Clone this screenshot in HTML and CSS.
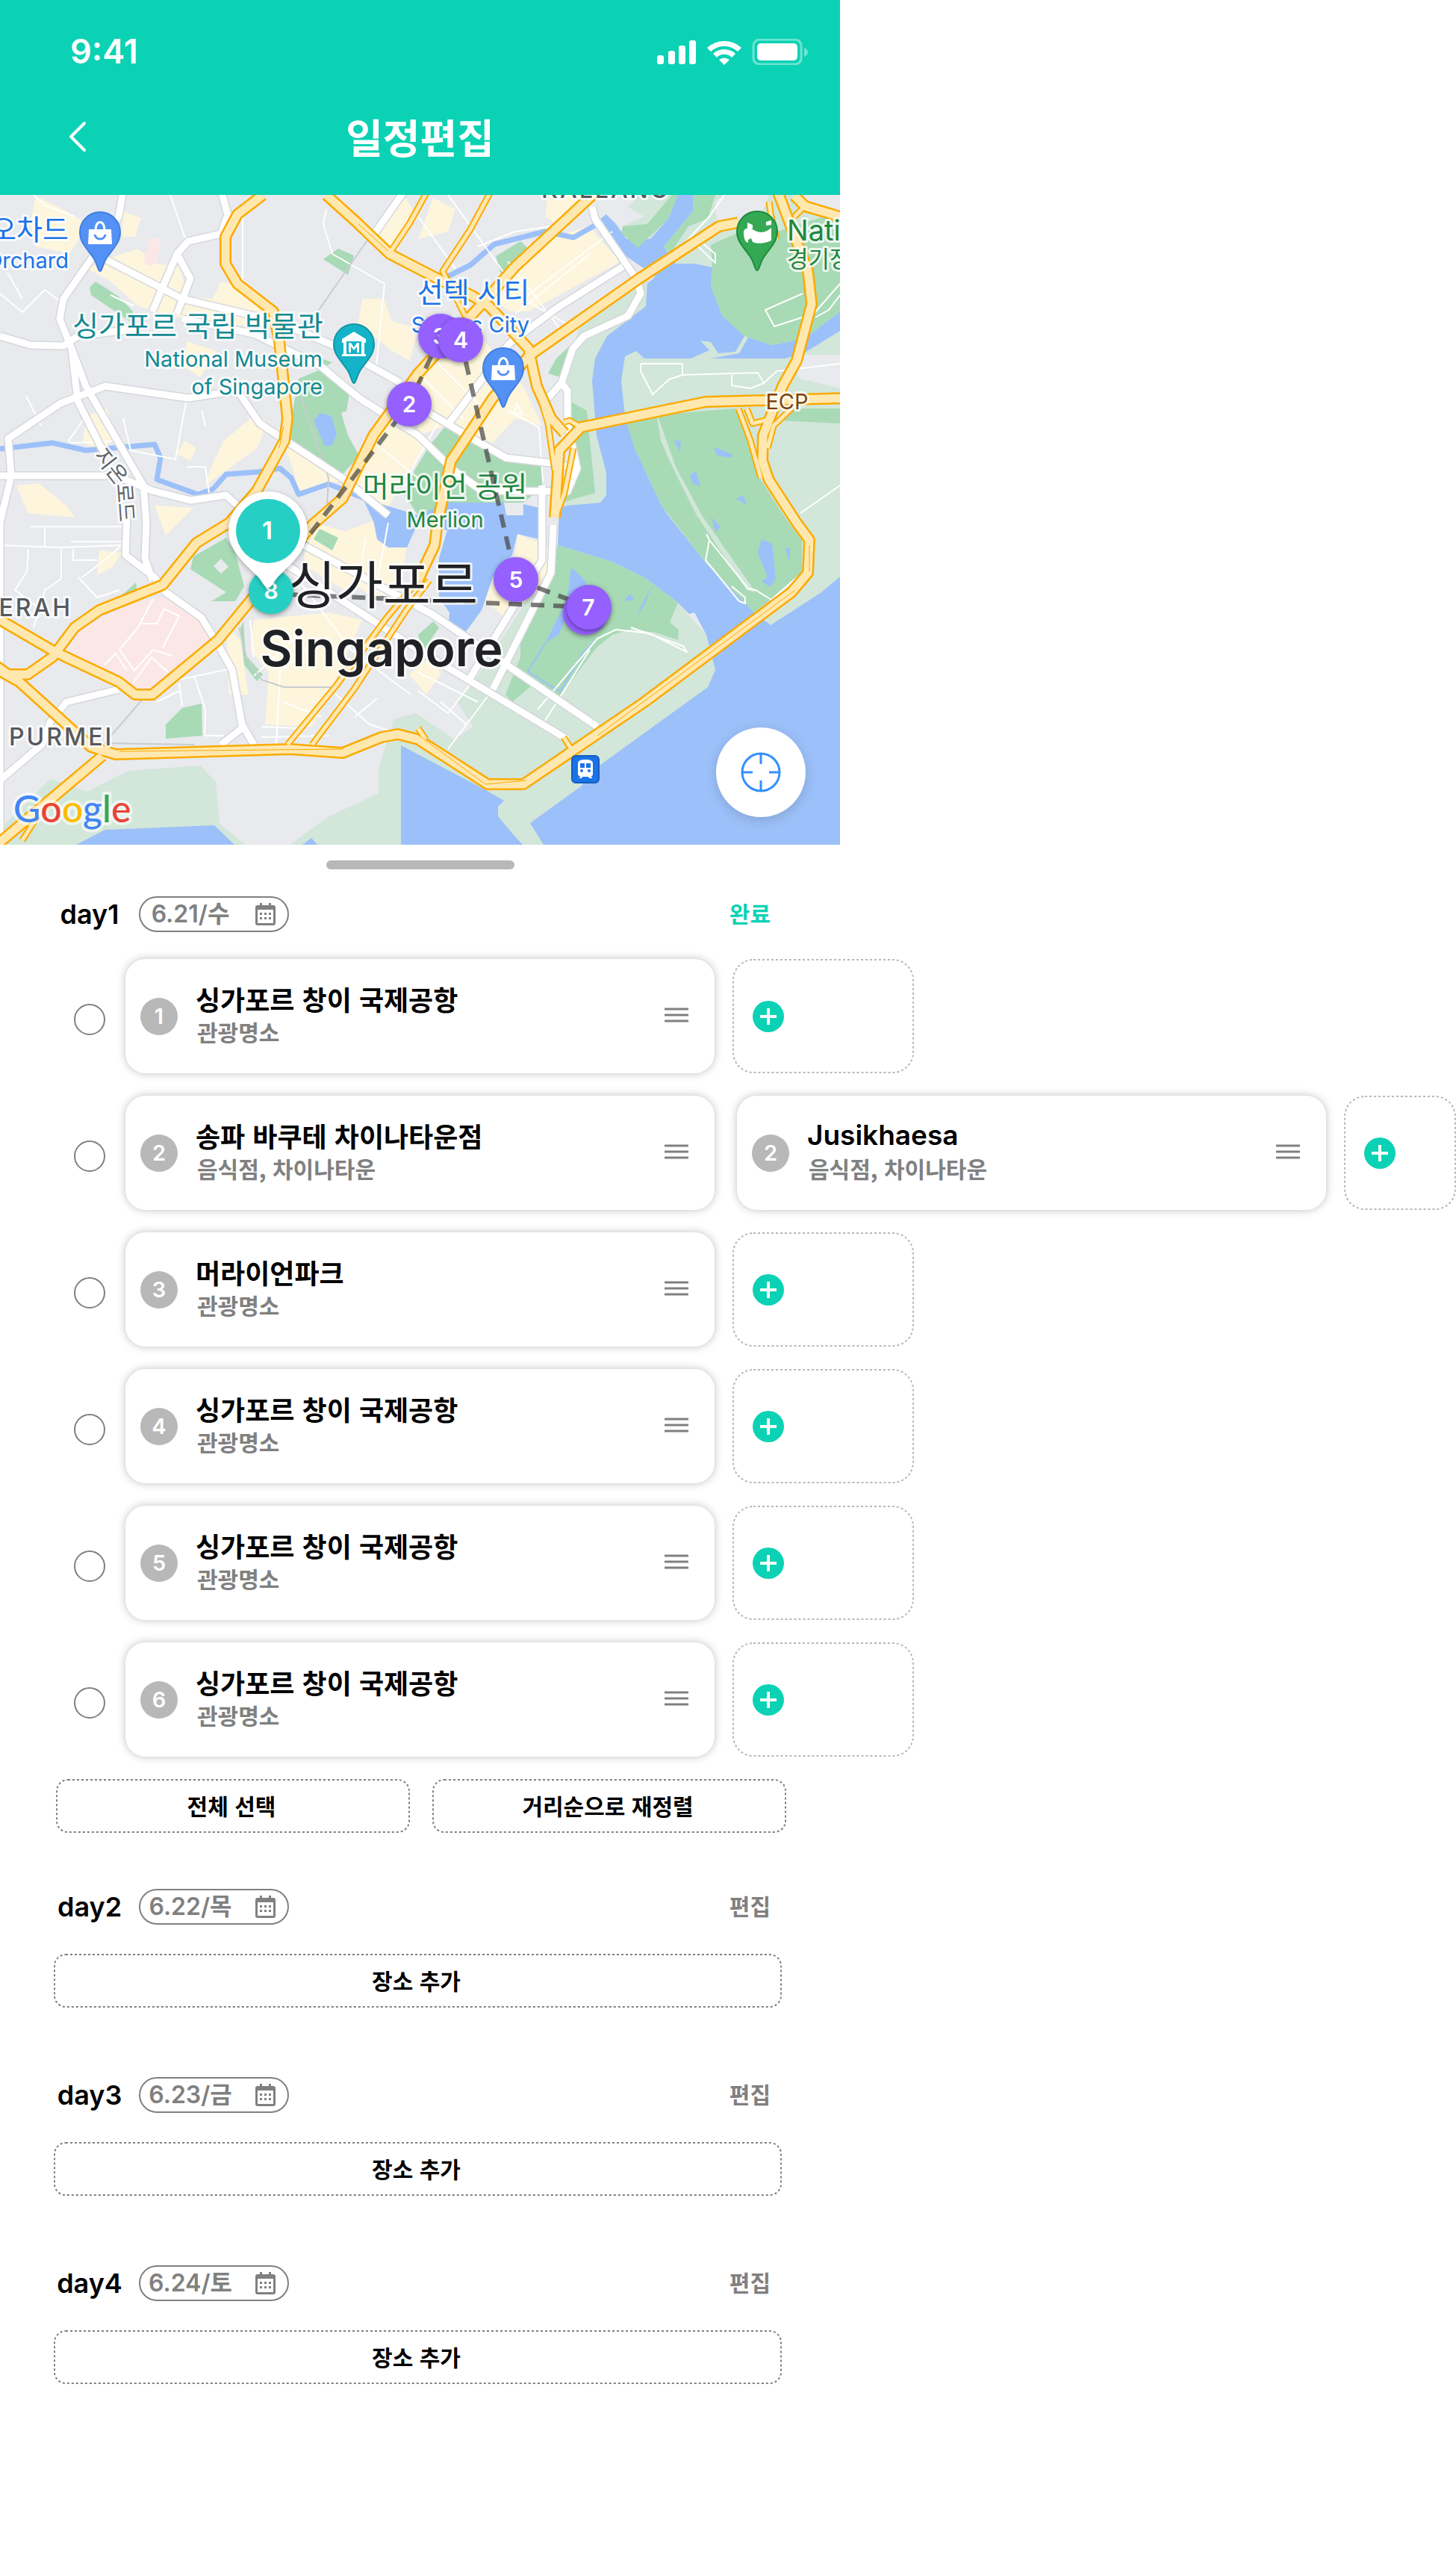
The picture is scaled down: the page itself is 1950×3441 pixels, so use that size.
FILE: index.html
```html
<!DOCTYPE html>
<html lang="ko">
<head>
<meta charset="utf-8">
<meta name="viewport" content="width=device-width, initial-scale=1">
<title>일정편집</title>
<link rel="stylesheet" href="styles.css">
</head>
<body>
<svg class="defs" aria-hidden="true">
  <symbol id="calendar" viewBox="0 0 27 30"><path fill-rule="evenodd" d="M6 0h3v3h9V0h3v3h3a3 3 0 0 1 3 3v21a3 3 0 0 1-3 3H3a3 3 0 0 1-3-3V6a3 3 0 0 1 3-3h3zM3 9v18h21V9zM6 13h3v3H6zm6 0h3v3h-3zm6 0h3v3h-3zM6 19h3v3H6zm6 0h3v3h-3zm6 0h3v3h-3z"/></symbol>
  <symbol id="plus" viewBox="0 0 42 42"><circle cx="21" cy="21" r="21" fill="#0bd2b4"/><path d="M21 10v22M10 21h22" stroke="#fff" stroke-width="4"/></symbol>
  <symbol id="handle" viewBox="0 0 32 20"><path d="M1 2h30M1 10h30M1 18h30" stroke="#808080" stroke-width="3" stroke-linecap="round"/></symbol>
</svg>

<main class="screen">
  <header class="top">
    <div class="status">
      <span class="clock">9:41</span>
      <svg class="status-icons" viewBox="0 0 203 35" fill="#fff" aria-hidden="true">
        <rect x="0" y="22" width="9" height="12" rx="3"/><rect x="15" y="16" width="9" height="18" rx="3"/><rect x="29" y="9" width="9" height="25" rx="3"/><rect x="43" y="2" width="9" height="32" rx="3"/>
        <path d="M67 12a34 34 0 0 1 46 0l-5 5a26 26 0 0 0-36 0zM75 20a22 22 0 0 1 30 0l-5 5a14 14 0 0 0-20 0zM83 28a11 11 0 0 1 14 0l-7 7z"/>
        <rect x="129" y="1" width="64" height="33" rx="8" fill="none" stroke="#fff" stroke-opacity=".4" stroke-width="3"/>
        <rect x="134" y="6" width="54" height="23" rx="5"/><path d="M197 12q5 2 5 6t-5 6z" opacity=".4"/>
      </svg>
    </div>
    <div class="title-bar">
      <button class="back" type="button" aria-label="뒤로"><svg viewBox="0 0 24 42"><path d="M21 3 3 21l18 18" fill="none" stroke="#fff" stroke-width="4" stroke-linecap="round" stroke-linejoin="round"/></svg></button>
      <h1>일정편집</h1>
    </div>
  </header>

  <section class="map" aria-label="지도">
    <svg class="map-canvas" viewBox="0 261 1125 870" preserveAspectRatio="xMidYMid slice">
      <defs>
        <g id="highways">
          <path d="M352 261 318 287 302 317V353L318 380 366 417 374 457 385 560 381 590 344 657 307 700 263 727 218 783 133 817 100 840 70 880 37 903H11L-10 888"/>
          <path d="M437 261 477 297 522 340 580 370 634 397 655 410 708 467 719 517 738 560 756 580"/>
          <path d="M800 255 690 357 649 403 560 500 500 583 459 667 418 703 333 807 292 857 204 930H181L159 913 74 873 0 830"/>
          <path d="M989 298 963 303 856 373 708 477 660 533 604 617 586 700 582 730 560 777"/>
          <path d="M1041 255 1082 363 1087 407 1067 483 1048 517 1022 583 1021 617 1030 643 1067 700 1084 723 1082 767 1060 793 863 940 701 1050H653L560 990 533 983 511 987 459 1008 389 1003 155 1010 122 1000 26 913-10 893"/>
          <path d="M137 1012-10 1136"/>
          <path d="M1135 533 945 538 778 572 749 603 743 693"/>
          <path d="M1064 262 1078 276 1135 293"/>
        </g>
        <g id="slips">
          <path d="M573 255 548 300 523 337M658 255 630 307 593 363 623 423M719 517 734 567 743 630M778 572 763 563 756 565"/>
          <path d="M560 777 518 827 451 917 385 997M575 777 544 817 474 923 418 997"/>
          <path d="M989 547 1005 590 1019 640M1060 547 1036 570 1028 600M1000 547 1008 567 1028 562M768 600 756 660 745 690M560 975 570 990M755 987 765 1003M1030 270 1034 300M1078 276 1064 290M55 1085 30 1125M1033 290 1040 320"/>
        </g>
        <g id="streets">
          <path d="M165 255 159 290 122 347 85 400 80 427 96 467 115 517 192 650 196 700 194 747 204 777"/>
          <path d="M0 450 41 462 85 463 104 450 185 440M96 467 104 537 141 610"/>
          <path d="M0 637 155 637 204 657 255 670 303 663 318 677M0 1130V700L15 637 11 587 81 540 141 517 252 533 318 523 348 567 463 643 520 690"/>
          <path d="M141 347 244 400 370 430 448 463 537 513M296 255 305 287 296 313 252 323 237 340 204 417M237 340 255 373 237 420"/>
          <path d="M244 427 340 447 429 490 481 533 560 583 608 630 645 657 760 658 773 627 760 567V523L752 513 767 467 782 450 841 423 858 393 852 373 797 293 793 277"/>
          <path d="M834 357 745 413 682 460 601 567M537 530 615 577 678 613 738 620 773 627"/>
          <path d="M726 650V750L630 907M741 703 738 767 660 923M388 720 580 823 800 973M385 757 560 870 760 990"/>
          <path d="M170 690 168 743 207 773 222 793 270 827 292 863 311 897 324 970 340 997M324 975 296 997"/>
          <path d="M159 923 89 940 67 967 56 997-5 1049M542 255 500 315M752 513 732 535"/>
        </g>
      </defs>
      <rect y="261" width="1125" height="870" fill="#e8eaed"/>
      <g fill="#fdf5dc">
        <path d="M48 263 80 278 118 300 93 340 48 330 40 300ZM165 283 189 292 181 317 163 317ZM118 360 141 347 185 333 207 353 240 357 252 397 285 400 296 377 311 380 355 410 366 437H333L229 423 185 410 148 377Z"/>
        <path d="M485 400 514 400 525 430 560 440 549 483 525 470 480 433ZM734 261H782L745 300 730 290ZM708 327 789 303 830 350 819 357 708 417H682L652 393ZM571 483 630 440 649 457 701 517 726 570 690 560 660 593 597 570 560 583 560 503ZM540 261 560 290 530 335 505 320 520 290ZM580 265 610 280 600 310 560 320Z"/>
        <path d="M115 557 144 547 152 587 137 603 111 593ZM237 607 248 590 263 600 255 617ZM344 553 359 567 344 600 307 627 274 650 285 620 300 590ZM381 597 459 643 400 657 392 627ZM22 650 52 647 89 677 100 693 37 687ZM207 677 259 680 222 717ZM250 457 290 470 268 505 245 490ZM518 560 555 570 570 600 548 630 518 683 459 643Z"/>
        <path d="M411 697 481 717 500 743 462 790 407 757ZM340 830 440 820 485 830 444 923 418 973 355 970 360 900 335 870ZM303 837 322 857 333 930H307ZM548 903 580 877 590 903 571 930ZM133 737 163 740 150 760 130 770ZM410 730 520 690 545 730 535 790 500 800 420 745Z"/>
      </g>
      <path fill="#fbe8e6" d="M89 870 111 840 178 807 222 799 266 827 281 857 200 925H178L126 890ZM200 318 216 320 211 350 203 356 192 353Z"/>
      <g fill="#d2e6da">
        <path d="M856 261 841 277 863 290 834 303 854 332 880 360 832 480 837 560 886 677 945 753 1026 837 1125 830V261Z"/>
        <path d="M863 373 782 423 767 463 757 520 763 640 749 678 804 673 870 600 870 373Z"/>
        <path d="M0 1110 67 1043 117 1060 172 1032 268 1025 289 1047 294 1103 329 1131H0ZM389 1131 437 1095 507 1062V1030L527 963 557 955 608 990 634 973 612 940 640 905 697 817 747 730 819 752 908 807 946 850 958 897 948 920 800 1040 740 1131Z"/>
      </g>
      <path fill="#e8eaed" d="M958 270 970 261H1030L1015 300 960 300ZM1078 475H1125V520L1071 507 1060 490ZM1060 261H1125V285L1080 272Z"/>
      <path fill="#fdf5dc" d="M693 715 723 727 737 735 734 760 723 790 675 827 650 803 660 773 690 745Z"/>
      <g fill="#9cc0f9">
        <path d="M908 261H928V283L889 330 904 353H930L954 358 952 383 967 422 997 450 1034 462 1078 453 1125 417V443L1078 472 1052 480H863L852 470 837 477 832 510 837 557 850 600 886 677 895 690 945 753 1010 820 1032 837 1074 810 1100 793 1125 772V1131H728L710 1102 778 1053 800 1027 948 920 958 897 946 850 930 820 923 822 908 807 863 773 819 752 747 730 749 678 804 673 812 663V633L799 583 793 510 797 480 813 450 865 410 867 380 878 370 834 340 804 293 812 287 825 300 839 320 871 320 895 293Z"/>
        <path d="M537 998 649 1057 675 1072 667 1080V1093L688 1118 700 1131H537ZM102 1131 141 1111 287 1105 314 1131ZM405 1131 417 1122 425 1131Z"/>
        <path d="M571 677 608 672 675 673 678 690H701V675L723 680V722L693 715 686 743 660 773 645 817 623 847 601 833 602 820 588 800V747L599 710 560 700 545 733 520 733 505 722 495 670 560 690Z"/>
      </g>
      <path fill="none" stroke="#9cc0f9" stroke-width="7" stroke-linejoin="round" d="M0 601 70 593 115 603 207 595 215 613 210 642 265 662 285 655 303 635 345 632 375 627 390 640 400 662 440 648 490 668 505 700M600 370 630 355 662 327 730 310 768 318 800 300"/>
      <g fill="#a8dab5">
        <path d="M900 261H908L895 293 854 332 832 312 834 303 867 300ZM928 261H958L948 293 922 303 897 340 889 330 928 283Z"/>
        <path d="M952 328 985 313 1041 310 1125 283V417L1078 453 1034 462 997 450 967 422 952 383 954 358Z"/>
        <path d="M837 560 945 550 985 547 998 570 1015 617 1019 643 1056 700 1074 723V767L1032 803 1010 820 945 753 886 677 850 600ZM1060 547H1125V567L1045 563Z"/>
        <path d="M747 730 819 752 863 773 908 807 897 833 909 843 908 857 878 847 845 842 820 850 798 868 748 935 715 915 686 940 677 930 697 880V845L735 780Z"/>
        <path d="M763 537 786 550 797 660 752 673 763 640ZM745 480 763 463 756 507 734 500Z"/>
        <path d="M429 495 400 507 392 550 388 590 459 635 481 610 466 583 457 553 464 550 468 527 448 507ZM575 597 597 570 678 613 726 623V653L701 673H600L560 690 540 660 555 630Z"/>
        <path d="M433 347 453 333 474 342 466 368ZM128 377 159 397 178 417V433L122 395 120 385ZM664 343 697 323 708 333 671 367ZM380 465 430 480 445 485 430 495 383 475Z"/>
        <path fill-rule="evenodd" d="M259 745 303 720 315 740 327 785 315 805H283L303 793 255 762ZM296 748 286 758 296 768 306 759Z"/>
        <path d="M222 970 244 948 270 942 271 985 222 989ZM335 817 326 833 329 877 352 903 344 912 327 890 322 840ZM160 800 182 780 184 795ZM428 708 453 720 445 737 420 722ZM560 850 580 832 588 840 565 875Z"/>
      </g>
      <path fill="#9cc0f9" d="M429 553 444 557 451 582 444 597H435L420 563ZM765 759 786 780 770 800 748 850 731 860 760 800ZM836 805 843 795 850 803ZM873 783 863 810 852 825ZM903 590H912L910 605ZM955 598 980 608 981 613 961 610ZM924 636 932 631 938 651 928 648ZM986 668 995 663 1000 676ZM1020 722 1034 728 1039 775 1031 786 1020 778 1028 773 1015 740ZM1052 735 1058 733V755ZM953 693 965 705 958 712Z"/>
      <path fill="#d2e6da" d="M880 560 885 590 898 620 933 690 1000 790 1012 793 940 690 905 625 882 560ZM938 456 952 458 962 473 985 471 997 450 1002 452 990 473 952 480H925L950 469Z"/>
      <path fill="none" stroke="#9cc0f9" stroke-width="2" d="M731 860 707 899 750 926 780 875 800 855"/>
      <path class="minor" d="M0 393 30 418 60 388 80 403M10 365 30 400M45 261 60 275 100 290M228 261 250 325M325 290 325 390M115 557 92 590 96 593 165 590M35 530 55 570M165 560 175 603 235 615 250 533M275 570 270 550M250 625 275 625 280 660M433 300 445 340 515 380 503 500M433 300 437 280M148 395 180 410M560 290 610 360M600 261 700 400 770 440M640 330 690 310 760 300M680 350 750 440M690 420 790 340M700 400 820 310M560 500 620 560M580 480 640 540M530 560 560 500M545 640 590 560M510 600 560 640M0 730 80 733 165 730M40 705H165M60 705V733M38 735 36 765 20 790 60 820M82 735V775L60 790 45 840M95 725H165M98 735V750H130M105 773 130 800 160 790M110 773 140 750 175 720"/>
      <path class="minor" d="M205 802 185 840 160 870 180 898 205 870 230 878M190 835H210L220 815 240 825 218 867M140 890 155 875 170 898M178 915 203 880 225 900M240 910 310 895M240 915 244 945M260 905 275 950 274 985 300 985M240 925 210 940M370 997 375 900 420 860M340 880 335 830M340 905 400 850M385 757 470 870 550 930M430 740 520 800M450 930 495 970 560 990M475 960 505 935M380 940 430 960M350 973 400 975M350 987 440 985M490 720 480 780M520 700 505 780"/>
      <path class="minor" d="M858 487H914V502L1015 499 1023 513 1005 520 980 516V502M914 502 896 508 874 528 858 497V487M1023 513 1040 497 1125 487M1075 393 1025 415 1037 437 1090 420 1125 380M1092 425 1110 415 1125 395M910 333 950 290 970 261M905 348 935 330 958 352 958 340 940 325M946 715 950 723 945 750 990 805 998 808 998 800 980 785M950 723 1002 788 1012 790 1033 803 1074 767M1072 687 1125 650M690 550 692 540 700 555 680 550 722 572 727 645M720 950 800 855 825 843 870 848 920 873 915 865 845 840M730 965 790 870M660 923 600 1003M635 910 600 955 560 925M625 970 590 940M560 900 640 940"/>
      <path fill="none" stroke="#c9ccd1" stroke-width="2" d="M500 310 420 425M403 530 440 640 438 680M320 840 330 880 350 910 380 920 450 920M192 935 140 995 260 997"/>
      <use href="#streets" class="street-edge"/><use href="#streets" class="street"/>
      <use href="#slips" class="slip-edge"/><use href="#highways" class="highway-edge"/>
      <use href="#highways" class="highway"/><use href="#slips" class="slip"/>
      <path fill="none" stroke="#fbab00" stroke-width="1" d="M380 570 374 600M160 1006 460 1003M560 984 650 1050 705 1045M480 300 520 336M800 985 1065 790M1084 730V765"/>

      <g class="label">
        <text x="725" y="265" class="district">KALLANG</text>
        <text x="97" y="825" class="district end">ERAH</text>
        <text x="12" y="998" class="district">PURMEI</text>
        <text transform="translate(148 625) rotate(52)" x="0" y="9" class="road-name">지온</text>
        <text transform="translate(167 673) rotate(86)" x="0" y="9" class="road-name">로드</text>
        <g class="shop"><text x="92" y="321" class="ko end">오차드</text><text x="92" y="359" class="en end">Orchard</text>
          <text x="634" y="405" class="ko mid">선텍 시티</text><text x="630" y="445" class="en mid">Suntec City</text></g>
        <g class="museum"><text x="433" y="450" class="ko end">싱가포르 국립 박물관</text><text x="432" y="491" class="en end">National Museum</text><text x="432" y="528" class="en end">of Singapore</text></g>
        <g class="park"><text x="596" y="665" class="ko mid">머라이언 공원</text><text x="596" y="706" class="en mid">Merlion</text>
          <text x="1054" y="322" class="venue">Nati</text><text x="1054" y="358" class="venue-ko">경기장</text></g>
        <text x="1054" y="548" class="exp en mid">ECP</text>
      </g>
      <path d="M617 455 691 776 789 813M590 450 548 541 358 790M789 813 363 795" fill="none" stroke="#444" stroke-opacity=".7" stroke-width="6" stroke-dasharray="18 12"/>
      <g class="label city"><text x="513" y="809" class="mid city-ko">싱가포르</text><text x="511" y="892" class="mid">Singapore</text></g>

      <g class="poi" stroke-width="2">
        <path id="drop" fill="#5491f5" stroke="#3f7fe0" d="M134 363c-3 0-3-9-9-18-8-12-18-20-18-34a27 27 0 0 1 54 0c0 14-10 22-18 34-6 9-6 18-9 18z"/>
        <path fill="#fff" d="M119 307h30l1 20h-32z"/><path fill="none" stroke="#fff" stroke-width="3" d="M128 308c0-14 12-14 12 0"/><path fill="none" stroke="#5491f5" stroke-width="3" d="M127 314c1 8 13 8 14 0"/>
        <g transform="translate(540 182)"><use href="#drop"/><path fill="#fff" d="M119 307h30l1 20h-32z"/><path fill="none" stroke="#fff" stroke-width="3" d="M128 308c0-14 12-14 12 0"/><path fill="none" stroke="#5491f5" stroke-width="3" d="M127 314c1 8 13 8 14 0"/></g>
        <path fill="#15b3c8" stroke="#1296a6" d="M474 513c-3 0-3-9-9-18-8-12-18-20-18-34a27 27 0 0 1 54 0c0 14-10 22-18 34-6 9-6 18-9 18z"/>
        <path fill="#fff" d="m474 444 16 10v5h-2v15h2v3h-32v-3h2v-15h-2v-5zm-10 13v17h20v-17zm3 2h3l4 6 4-6h3v13h-3v-8l-4 5-4-5v8h-3z" fill-rule="evenodd"/>
        <path fill="#34a853" stroke="#1d8a3e" d="M1014 362c-3 0-3-9-9-18-8-12-18-20-18-34a27 27 0 0 1 54 0c0 14-10 22-18 34-6 9-6 18-9 18z"/>
        <path fill="#fff" d="M996 311c0-5 6-7 12-4 9 6 17 5 25-2v17c-7 4-20 5-25 2l-2-5-4 2v4c-5-1-6-8-6-14zM1001 298l7 3v5h-7zM1026 297l7-2v6l-7 1zM1018 307l15-4M1020 303l13-3"/>
        <rect x="766" y="1012" width="36" height="36" rx="5" fill="#1a73e8" stroke="#155cc0"/>
        <path fill="#fff" fill-rule="evenodd" d="M774 1022q0-5 10-5t10 5v14q0 3-3 4l2 1v1h-4l-1-2h-8l-1 2h-4l3-2q-4-1-4-4zm3 0v6h6v-6zm8 0v6h6v-6zm-8 10a2 2 0 1 0 4 0 2 2 0 1 0-4 0zm10 0a2 2 0 1 0 4 0 2 2 0 1 0-4 0z"/>
      </g>
      <g class="pins">
        <circle cx="363" cy="792" r="30" class="teal"/><text x="363" y="802">8</text>
        <path class="drop-white" d="M359 787c-4 0-6-5-12-13-9-11-41-33-41-63a53 53 0 0 1 106 0c0 30-32 52-41 63-6 8-8 13-12 13z"/>
        <circle cx="359" cy="711" r="43" class="teal"/><text x="358" y="722" class="big">1</text>
        <circle cx="548" cy="541" r="30"/><text x="548" y="552">2</text>
        <circle cx="590" cy="450" r="30"/><text x="589" y="461">3</text>
        <circle cx="617" cy="455" r="30"/><text x="617" y="466">4</text>
        <circle cx="691" cy="776" r="30"/><text x="691" y="787">5</text>
        <circle cx="784" cy="820" r="30"/><circle cx="789" cy="813" r="30"/><text x="788" y="824">7</text>
      </g>
      <text x="18" y="1101" class="google"><tspan fill="#4285f4">G</tspan><tspan fill="#ea4335">o</tspan><tspan fill="#fbbc05">o</tspan><tspan fill="#4285f4">g</tspan><tspan fill="#34a853">l</tspan><tspan fill="#ea4335">e</tspan></text>
    </svg>
    <button class="locate" type="button" aria-label="현재 위치"><svg viewBox="0 0 54 54"><g fill="none" stroke="#3490ff" stroke-width="3"><circle cx="27" cy="27" r="25"/><path d="M27 2v14M27 38v14M2 27h14M38 27h14"/></g></svg></button>
  </section>

  <section class="sheet">
    <div class="grabber"></div>

    <section class="day">
      <div class="day-head"><h2>day1</h2><button class="date" type="button"><span>6.21/수</span><svg><use href="#calendar"/></svg></button><button class="edit done" type="button">완료</button></div>
      <ul class="stops">
        <li><input type="checkbox" aria-label="1번 장소 선택">
          <article class="card"><span class="num">1</span><div class="place"><h3>싱가포르 창이 국제공항</h3><p>관광명소</p></div><button class="grip" type="button" aria-label="순서 변경"><svg><use href="#handle"/></svg></button></article>
          <button class="add" type="button" aria-label="장소 추가"><svg class="dash"><rect rx="27"/></svg><svg class="plus"><use href="#plus"/></svg></button></li>
        <li><input type="checkbox" aria-label="2번 장소 선택">
          <article class="card"><span class="num">2</span><div class="place"><h3>송파 바쿠테 차이나타운점</h3><p>음식점, 차이나타운</p></div><button class="grip" type="button" aria-label="순서 변경"><svg><use href="#handle"/></svg></button></article>
          <article class="card alt"><span class="num">2</span><div class="place"><h3 lang="en">Jusikhaesa</h3><p>음식점, 차이나타운</p></div><button class="grip" type="button" aria-label="순서 변경"><svg><use href="#handle"/></svg></button></article>
          <button class="add narrow" type="button" aria-label="장소 추가"><svg class="dash"><rect rx="27"/></svg><svg class="plus"><use href="#plus"/></svg></button></li>
        <li><input type="checkbox" aria-label="3번 장소 선택">
          <article class="card"><span class="num">3</span><div class="place"><h3>머라이언파크</h3><p>관광명소</p></div><button class="grip" type="button" aria-label="순서 변경"><svg><use href="#handle"/></svg></button></article>
          <button class="add" type="button" aria-label="장소 추가"><svg class="dash"><rect rx="27"/></svg><svg class="plus"><use href="#plus"/></svg></button></li>
        <li><input type="checkbox" aria-label="4번 장소 선택">
          <article class="card"><span class="num">4</span><div class="place"><h3>싱가포르 창이 국제공항</h3><p>관광명소</p></div><button class="grip" type="button" aria-label="순서 변경"><svg><use href="#handle"/></svg></button></article>
          <button class="add" type="button" aria-label="장소 추가"><svg class="dash"><rect rx="27"/></svg><svg class="plus"><use href="#plus"/></svg></button></li>
        <li><input type="checkbox" aria-label="5번 장소 선택">
          <article class="card"><span class="num">5</span><div class="place"><h3>싱가포르 창이 국제공항</h3><p>관광명소</p></div><button class="grip" type="button" aria-label="순서 변경"><svg><use href="#handle"/></svg></button></article>
          <button class="add" type="button" aria-label="장소 추가"><svg class="dash"><rect rx="27"/></svg><svg class="plus"><use href="#plus"/></svg></button></li>
        <li><input type="checkbox" aria-label="6번 장소 선택">
          <article class="card"><span class="num">6</span><div class="place"><h3>싱가포르 창이 국제공항</h3><p>관광명소</p></div><button class="grip" type="button" aria-label="순서 변경"><svg><use href="#handle"/></svg></button></article>
          <button class="add" type="button" aria-label="장소 추가"><svg class="dash"><rect rx="27"/></svg><svg class="plus"><use href="#plus"/></svg></button></li>
      </ul>
      <div class="bulk">
        <button class="wide" type="button"><svg class="dash"><rect rx="15"/></svg>전체 선택</button>
        <button class="wide" type="button"><svg class="dash"><rect rx="15"/></svg>거리순으로 재정렬</button>
      </div>
    </section>

    <div class="later">
      <section class="day">
        <div class="day-head"><h2>day2</h2><button class="date" type="button"><span>6.22/목</span><svg><use href="#calendar"/></svg></button><button class="edit" type="button">편집</button></div>
        <div class="empty"><button class="wide" type="button"><svg class="dash"><rect rx="15"/></svg>장소 추가</button></div>
      </section>
      <section class="day">
        <div class="day-head"><h2>day3</h2><button class="date" type="button"><span>6.23/금</span><svg><use href="#calendar"/></svg></button><button class="edit" type="button">편집</button></div>
        <div class="empty"><button class="wide" type="button"><svg class="dash"><rect rx="15"/></svg>장소 추가</button></div>
      </section>
      <section class="day">
        <div class="day-head"><h2>day4</h2><button class="date" type="button"><span>6.24/토</span><svg><use href="#calendar"/></svg></button><button class="edit" type="button">편집</button></div>
        <div class="empty"><button class="wide" type="button"><svg class="dash"><rect rx="15"/></svg>장소 추가</button></div>
      </section>
    </div>
  </section>
</main>
</body>
</html>
```
FILE: styles.css
```css
:root {
  --teal: #0bd2b4;
  --gray: #808080;
  --silver: #b8b8b8;
  --latin: "Inter", "Noto Sans CJK KR", sans-serif;
  --korean: "Noto Sans CJK KR", "Inter", sans-serif;
}
* { box-sizing: border-box; }
body { margin: 0; background: #fff; color: #000; font-family: var(--korean); }
h1, h2, h3, p, ul { margin: 0; padding: 0; }
button { padding: 0; border: 0; background: none; color: inherit; font: inherit; cursor: pointer; }
svg { display: block; }
.defs { position: absolute; width: 0; height: 0; }

.screen { width: 100%; max-width: 1125px; }

/* header */
.top { height: 261px; padding-top: 41px; background: var(--teal); color: #fff; }
.status { display: flex; justify-content: space-between; align-items: center; height: 56px; padding: 0 42px 0 94px; }
.clock { font: 600 45px/56px var(--latin); }
.status-icons { width: 203px; height: 35px; }
.title-bar { display: grid; grid-template-columns: 1fr auto 1fr; align-items: center; height: 80px; margin-top: 46px; padding: 0 92px; }
.back { justify-self: start; }
.back svg { width: 24px; height: 42px; }
h1 { font-size: 54px; line-height: 80px; font-weight: 700; }

/* map */
.map { position: relative; aspect-ratio: 1125 / 870; overflow: hidden; }
.map-canvas { width: 100%; height: 100%; }
.minor, .street, .street-edge, .highway, .highway-edge, .slip, .slip-edge { fill: none; stroke-linejoin: round; }
.minor { stroke: #fff; stroke-width: 2; }
.street-edge { stroke: #d5d7dc; stroke-width: 12; }
.street { stroke: #fff; stroke-width: 9; }
.highway-edge { stroke: #fbab00; stroke-width: 16; }
.highway { stroke: #ffe8b0; stroke-width: 11; }
.slip-edge { stroke: #fbab00; stroke-width: 9; }
.slip { stroke: #ffe8b0; stroke-width: 5; }
.label text { paint-order: stroke; stroke: #fff; stroke-opacity: .8; stroke-width: 6; stroke-linejoin: round; }
.end { text-anchor: end; }
.mid { text-anchor: middle; }
.ko { font: 400 38px var(--korean); }
.en { font: 400 29px var(--latin); }
.venue { font: 400 38px var(--latin); }
.venue-ko { font: 400 31px var(--korean); }
.district { font: 500 32px var(--latin); letter-spacing: 3px; fill: #55585e; }
.road-name { font: 400 28px var(--korean); text-anchor: middle; fill: #5f6368; }
.shop { fill: #1a73e8; }
.museum { fill: #128992; }
.park { fill: #1e8640; }
.exp { fill: #7a4510; }
.city { font: 600 66px var(--latin); fill: #202124; }
.city-ko { font: 400 69px var(--korean); }
.google { font: 500 50px "Lato", sans-serif; paint-order: stroke; stroke: #fff; stroke-opacity: .6; stroke-width: 8; stroke-linejoin: round; }
.pins circle { fill: #9560ff; filter: drop-shadow(0 2px 3px rgba(0, 0, 0, .4)); }
.pins .teal { fill: #26cfc3; }
.drop-white { fill: #fff; filter: drop-shadow(0 2px 3px rgba(0, 0, 0, .3)); }
.drop-white + .teal { filter: none; }
.pins text { font: 600 30px var(--latin); fill: #fff; text-anchor: middle; }
.pins .big { font-size: 33px; }
.locate { position: absolute; right: 46px; bottom: 37px; display: grid; place-items: center; width: 120px; height: 120px; border-radius: 50%; background: #fff; box-shadow: 0 4px 16px rgba(0, 0, 0, .15); }
.locate svg { width: 54px; height: 54px; }

/* day list */
.sheet { padding-top: 21px; }
.grabber { width: 252px; height: 12px; margin: 0 auto; border-radius: 6px; background: var(--silver); }
.day-head { display: flex; align-items: center; height: 48px; padding: 0 93px 0 76px; }
.grabber + .day { margin-top: 36px; }
h2 { width: 88px; margin-right: 22px; text-align: center; font: 600 36px/48px var(--latin); }
.date { display: flex; align-items: center; width: 201px; height: 48px; padding: 0 16px 0 10px; border: 2px solid var(--gray); border-radius: 24px; color: var(--gray); font: 600 32px/44px var(--latin); }
.date span { width: 114px; text-align: center; white-space: nowrap; }
.date svg { width: 27px; height: 30px; margin-left: auto; fill: currentColor; }
.edit { margin-left: auto; padding-bottom: 4px; color: var(--gray); font-size: 30px; line-height: 44px; font-weight: 700; }
.done { color: var(--teal); }

.stops { display: grid; gap: 30px; margin-top: 36px; list-style: none; }
.stops li { display: flex; align-items: center; gap: 24px; width: max-content; height: 153px; padding-left: 99px; }
.stops input { appearance: none; width: 42px; height: 42px; margin: 9px 3px 0 0; border: 2px solid var(--gray); border-radius: 50%; }
.card { display: flex; align-items: center; width: 789px; height: 153px; padding: 0 35px 0 20px; border-radius: 27px; background: #fff; box-shadow: 0 0 12px rgba(0, 0, 0, .25); }
.alt { margin-left: 6px; }
.num { width: 50px; height: 50px; border-radius: 50%; background: var(--silver); color: #fff; text-align: center; font: 600 29px/50px var(--latin); }
.place { flex: 1; margin-left: 24px; padding-bottom: 4px; }
h3 { font-size: 36px; line-height: 44px; font-weight: 700; }
h3:lang(en) { font: 600 37px/44px var(--latin); }
.place p { margin-left: 2px; color: var(--gray); font-size: 30px; line-height: 44px; font-weight: 700; }
.grip { padding-bottom: 3px; }
.grip svg { width: 32px; height: 20px; }
.add, .wide { position: relative; }
.add { width: 243px; height: 153px; padding-left: 27px; }
.narrow { width: 150px; }
.plus { width: 42px; height: 42px; }
.dash { position: absolute; inset: 0; width: 100%; height: 100%; }
.dash rect { x: 1px; y: 1px; width: calc(100% - 2px); height: calc(100% - 2px); fill: none; stroke: var(--gray); stroke-width: 2; stroke-dasharray: 3 3; }
.add .dash rect { stroke: var(--silver); }

.bulk { display: grid; grid-template-columns: 1fr 1fr; gap: 30px; margin-top: 30px; padding: 0 72px 0 75px; }
.wide { width: 100%; height: 72px; padding: 0 4px 2px 0; font-size: 30px; line-height: 70px; font-weight: 700; }
.later { display: grid; gap: 93px; margin-top: 75px; }
.empty { margin-top: 39px; padding: 0 78px 0 72px; }
```
